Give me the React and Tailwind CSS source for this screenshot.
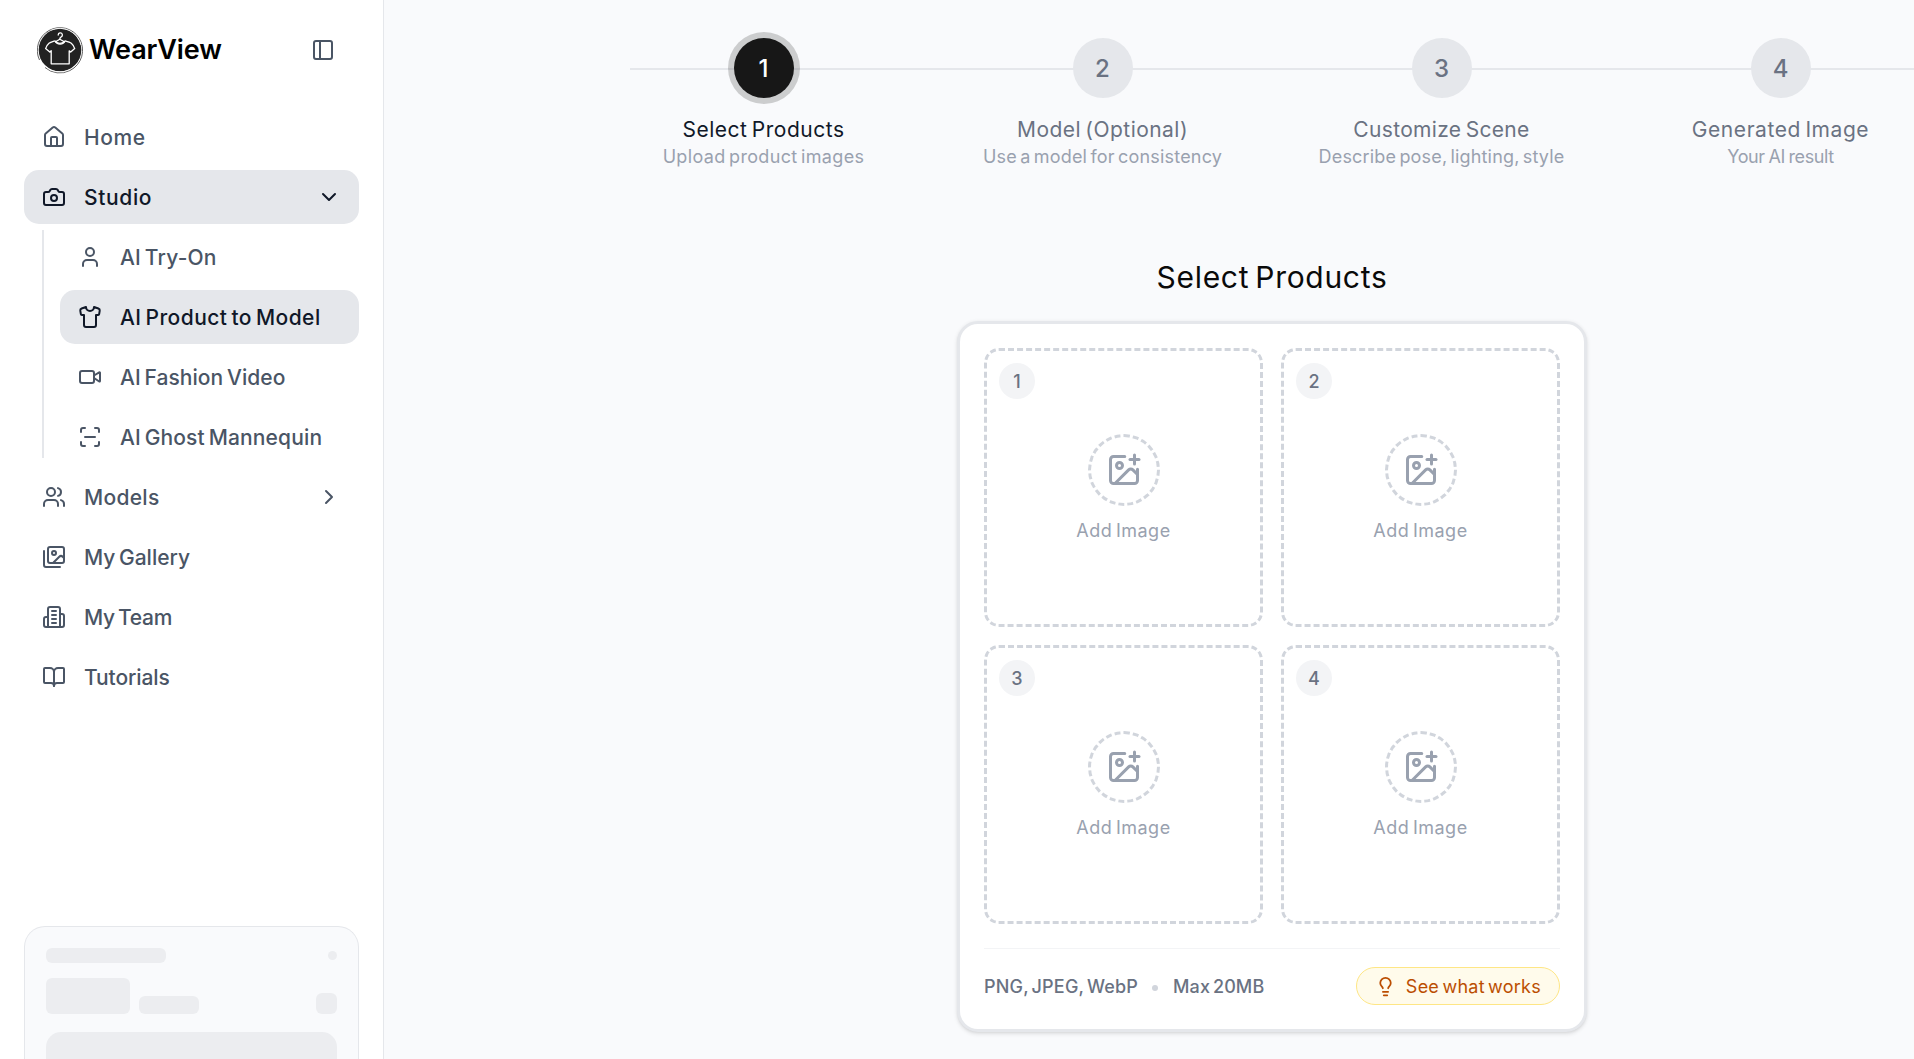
import React from "react";
import {
  BookOpen,
  Camera,
  ChevronDown,
  ChevronRight,
  House,
  ImagePlus,
  Lightbulb,
  PanelLeft,
  Shirt,
  User,
  Users,
  Video,
} from "lucide-react";

const iconProps = { size: 24, strokeWidth: 2, className: "shrink-0" };

// Icons that lucide draws differently are kept here
const Icon = ({ children }) => (
  <svg width="24" height="24" viewBox="0 0 24 24" fill="none" stroke="currentColor" strokeWidth="2" strokeLinecap="round" strokeLinejoin="round" className="shrink-0">
    {children}
  </svg>
);

const GalleryIcon = () => (
  <Icon>
    <path d="M18 22H4a2 2 0 0 1-2-2V6" />
    <path d="m22 13-1.296-1.296a2.41 2.41 0 0 0-3.408 0L11 18" />
    <circle cx="12" cy="8" r="2" />
    <rect width="16" height="16" x="6" y="2" rx="2" />
  </Icon>
);

const TeamIcon = () => (
  <Icon>
    <path d="M6 22V4a2 2 0 0 1 2-2h8a2 2 0 0 1 2 2v18Z" />
    <path d="M6 12H4a2 2 0 0 0-2 2v6a2 2 0 0 0 2 2h2" />
    <path d="M18 9h2a2 2 0 0 1 2 2v9a2 2 0 0 1-2 2h-2" />
    <path d="M10 6h4M10 10h4M10 14h4M10 18h4" />
  </Icon>
);

const ScanIcon = () => (
  <Icon>
    <path d="M3 7V5a2 2 0 0 1 2-2h2M17 3h2a2 2 0 0 1 2 2v2M21 17v2a2 2 0 0 1-2 2h-2M7 21H5a2 2 0 0 1-2-2v-2" />
    <path d="M7 12h10" />
  </Icon>
);

const Logo = () => (
  <svg width="46" height="48" viewBox="0 0 46 48" fill="none" className="shrink-0">
    <circle cx="23" cy="24" r="21.3" fill="#222222" />
    <path d="M2.5 34A22.6 22.6 0 0 1 12 4.5A22.6 22.6 0 0 1 42 12A22.6 22.6 0 0 1 33 44.5A22.6 22.6 0 0 1 8 41.5" stroke="#3a3a3a" strokeWidth="0.8" />
    <path d="M14 4.2A21.8 21.8 0 0 1 44 19" stroke="#ffffff" strokeWidth="0.7" />
    <path d="M6 38A21.8 21.8 0 0 0 33 43.6" stroke="#ffffff" strokeWidth="0.7" />
    <g stroke="#ffffff" strokeWidth="1.3" strokeLinecap="round" strokeLinejoin="round">
      <path d="M21.2 9a2.1 2.1 0 1 1 3 1.9c-1 .5-1.4 1-1.4 2.3" />
      <path d="M18.5 15.8l4.3-2.6 4.6 2.6c-2.4 2-6.5 2-8.9 0Z" />
      <path d="M18 14.8c-3 1-5 1.6-6 2.4-1.5 1.2-2.7 3.4-3.4 5.4l4.2 3.5 1.4-1.3v13h18v-13l1.5 1.3 4-3.5c-.8-2.2-1.9-4.2-3.4-5.4-1-.8-3-1.5-6.2-2.4-1.8 4.5-8.2 4.5-10.1 0Z" />
    </g>
  </svg>
);

const studioItems = [
  { label: "AI Try-On", icon: <User {...iconProps} />, tracking: "tracking-[0.2px]" },
  { label: "AI Product to Model", icon: <Shirt {...iconProps} />, tracking: "tracking-[0.44px]", active: true },
  { label: "AI Fashion Video", icon: <Video {...iconProps} />, tracking: "tracking-[0.07px]" },
  { label: "AI Ghost Mannequin", icon: <ScanIcon />, tracking: "tracking-[0.15px]" },
];

const steps = [
  { title: "Select Products", desc: "Upload product images", t: "tracking-[0.52px]", d: "tracking-[0.35px]" },
  { title: "Model (Optional)", desc: "Use a model for consistency", t: "tracking-[0.46px]", d: "tracking-[0.2px]" },
  { title: "Customize Scene", desc: "Describe pose, lighting, style", t: "tracking-[0.33px]", d: "tracking-[0.17px]" },
  { title: "Generated Image", desc: "Your AI result", t: "tracking-[0.56px]", d: "tracking-[-0.4px] [word-spacing:-1px]" },
];

const NavItem = ({ icon, label, active, tracking, trailing }) => (
  <a
    className={`flex h-[54px] items-center gap-[18px] rounded-[15px] px-[18px] text-[21px] leading-[30px] font-medium ${
      active ? "bg-gray-200 text-gray-900" : "text-gray-600"
    }`}
  >
    {icon}
    <span className={`flex-1 pt-0.5 whitespace-nowrap ${tracking}`}>{label}</span>
    {trailing}
  </a>
);

const Sidebar = () => (
  <aside className="flex w-[384px] shrink-0 flex-col border-r border-gray-200 bg-white">
    <div className="flex items-center pt-[26px] pr-[48px] pl-[37px]">
      <Logo />
      <span className="ml-1.5 flex-1 text-[27px] leading-[48px] font-semibold tracking-[-0.1px] text-black">WearView</span>
      <PanelLeft size={24} strokeWidth={2} className="text-gray-600" />
    </div>

    <nav className="mt-[36px] flex flex-col gap-1.5 px-6">
      <NavItem icon={<House {...iconProps} />} label="Home" tracking="tracking-[0.6px]" />
      <NavItem icon={<Camera {...iconProps} />} label="Studio" tracking="tracking-[0.65px]" active trailing={<ChevronDown {...iconProps} />} />
      <div className="flex pl-[18px]">
        <div className="mb-1.5 w-[2px] bg-gray-200" />
        <div className="ml-4 flex flex-1 flex-col gap-1.5">
          {studioItems.map((item) => (
            <NavItem key={item.label} {...item} />
          ))}
        </div>
      </div>
      <NavItem icon={<Users {...iconProps} />} label="Models" tracking="tracking-[0.3px]" trailing={<ChevronRight {...iconProps} />} />
      <NavItem icon={<GalleryIcon />} label="My Gallery" tracking="tracking-normal" />
      <NavItem icon={<TeamIcon />} label="My Team" tracking="tracking-[-0.3px]" />
      <NavItem icon={<BookOpen {...iconProps} />} label="Tutorials" tracking="tracking-[-0.1px]" />
    </nav>

    {/* Plan card while it is loading */}
    <div className="mx-6 mt-auto h-[133px] shrink-0 rounded-t-[21px] border border-b-0 border-gray-200 bg-[#f9fafc] px-[21px] pt-[21px]">
      <div className="flex items-center justify-between">
        <div className="h-[15px] w-[120px] rounded-[6px] bg-[#ecedf0]" />
        <div className="size-[9px] rounded-full bg-[#ecedf0]" />
      </div>
      <div className="mt-[15px] flex items-end">
        <div className="h-9 w-[84px] rounded-[6px] bg-[#ecedf0]" />
        <div className="ml-[9px] h-[18px] w-[60px] rounded-[6px] bg-[#ecedf0]" />
        <div className="ml-auto size-[21px] rounded-[6px] bg-[#ecedf0]" />
      </div>
      <div className="mt-[18px] h-[27px] rounded-t-[15px] bg-[#ecedf0]" />
    </div>
  </aside>
);

const Stepper = () => (
  <div className="relative ml-[210px] grid w-[1356px] shrink-0 grid-cols-4 pt-[38px]">
    <div className="absolute top-[68px] right-0 left-[36px] h-[2px] bg-gray-200" />
    {steps.map((s, i) => (
      <div key={s.title} className="relative flex flex-col items-center whitespace-nowrap">
        <div
          className={`flex size-[60px] items-center justify-center rounded-full pt-0.5 text-[24px] font-medium ${
            i === 0 ? "bg-neutral-900 text-white ring-6 ring-neutral-900/20" : "bg-gray-200 text-gray-500"
          }`}
        >
          {i + 1}
        </div>
        <p className={`mt-[18px] text-[21px] leading-[28px] font-normal ${i === 0 ? "text-gray-900" : "text-gray-500"} ${s.t}`}>{s.title}</p>
        <p className={`-mt-px text-[18px] leading-[27px] text-gray-400 ${s.d}`}>{s.desc}</p>
      </div>
    ))}
  </div>
);

const Slot = ({ number }) => (
  <div className="relative flex size-[279px] flex-col items-center justify-center rounded-[15px] border-3 border-dashed border-gray-300">
    <span className="absolute top-3 left-3 flex size-9 items-center justify-center rounded-full bg-gray-100 text-[18px] font-medium text-gray-500">
      {number}
    </span>
    <div className="flex size-[72px] items-center justify-center rounded-full border-3 border-dashed border-gray-300 text-gray-400">
      <ImagePlus size={36} strokeWidth={2} />
    </div>
    <span className="mt-3 pt-[3px] text-[18px] leading-5 font-normal tracking-[0.5px] text-gray-400">Add Image</span>
  </div>
);

const App = () => {
  return (
    <div className="flex h-[1059px] w-full overflow-hidden bg-[#f9fafc] font-['Inter',sans-serif] [word-spacing:-2px]">
      <Sidebar />
      <main className="flex min-w-0 flex-1 flex-col overflow-hidden">
        <Stepper />
        <div className="ml-[573px] flex w-[630px] flex-col items-center">
          <h2 className="mt-[86px] text-[30px] leading-[42px] font-normal tracking-[0.7px] text-neutral-950 [word-spacing:-3px]">Select Products</h2>
          <div className="mt-[23px] w-full rounded-[21px] border-3 border-gray-200 bg-white p-6 shadow-[0_1.5px_4.5px_rgba(0,0,0,0.1),0_1.5px_3px_-1.5px_rgba(0,0,0,0.1)]">
            <div className="grid grid-cols-2 gap-[18px]">
              {[1, 2, 3, 4].map((n) => (
                <Slot key={n} number={n} />
              ))}
            </div>
            <div className="mt-6 flex items-center justify-between border-t border-gray-100 pt-[18px]">
              <div className="flex items-center text-[18px] leading-[27px] font-medium text-gray-500">
                <span className="tracking-[0.18px]">PNG, JPEG, WebP</span>
                <span className="mt-1 mr-[15px] ml-[14px] size-1.5 rounded-full bg-gray-300" />
                <span className="tracking-[0.1px]">Max 20MB</span>
              </div>
              <button className="flex h-[38px] items-center gap-[10px] rounded-full border border-amber-200 bg-amber-50 px-[18px] text-[18px] font-normal text-amber-700 [word-spacing:-2px]">
                <Lightbulb size={21} strokeWidth={2} />
                <span className="tracking-[0.25px]">See what works</span>
              </button>
            </div>
          </div>
        </div>
      </main>
    </div>
  );
};

export default App;
